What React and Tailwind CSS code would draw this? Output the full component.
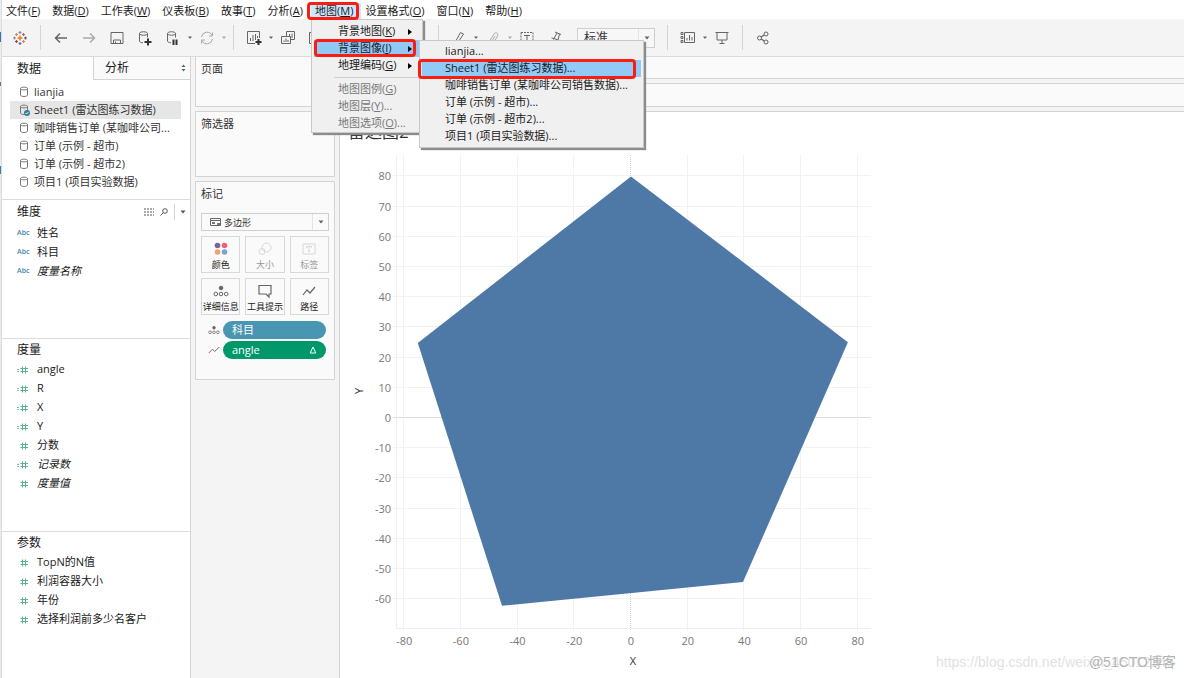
import clsx from 'clsx';

const MENUS = [
  ['文件', 'F'], ['数据', 'D'], ['工作表', 'W'], ['仪表板', 'B'], ['故事', 'T'],
  ['分析', 'A'], ['地图', 'M'], ['设置格式', 'O'], ['窗口', 'N'], ['帮助', 'H'],
];

const MAP_MENU = [
  { label: '背景地图', hotkey: 'K', sub: true },
  { label: '背景图像', hotkey: 'I', sub: true, active: true },
  { label: '地理编码', hotkey: 'G', sub: true },
  null,
  { label: '地图图例', hotkey: 'G', disabled: true },
  { label: '地图层', hotkey: 'Y', suffix: '...', disabled: true },
  { label: '地图选项', hotkey: 'O', suffix: '...', disabled: true },
];

const IMAGE_MENU = [
  'lianjia...',
  'Sheet1 (雷达图练习数据)...',
  '咖啡销售订单 (某咖啡公司销售数据)...',
  '订单 (示例 - 超市)...',
  '订单 (示例 - 超市2)...',
  '项目1 (项目实验数据)...',
];

const SOURCES = [
  'lianjia',
  'Sheet1 (雷达图练习数据)',
  '咖啡销售订单 (某咖啡公司...',
  '订单 (示例 - 超市)',
  '订单 (示例 - 超市2)',
  '项目1 (项目实验数据)',
];

const DIMENSIONS = [
  { name: '姓名', kind: 'abc' },
  { name: '科目', kind: 'abc' },
  { name: '度量名称', kind: 'abc', italic: true },
];

const MEASURES = [
  { name: 'angle', kind: 'calc' },
  { name: 'R', kind: 'calc' },
  { name: 'X', kind: 'calc' },
  { name: 'Y', kind: 'calc' },
  { name: '分数', kind: 'num' },
  { name: '记录数', kind: 'calc', italic: true },
  { name: '度量值', kind: 'num', italic: true },
];

const PARAMS = [
  { name: 'TopN的N值', kind: 'num' },
  { name: '利润容器大小', kind: 'num' },
  { name: '年份', kind: 'num' },
  { name: '选择利润前多少名客户', kind: 'num' },
];

const POINTS = [[0, 80], [76.5, 25.1], [39.5, -54.3], [-45.5, -62.2], [-75.2, 24.8]];

export default function App() {
  return (
    <div className="relative flex min-h-screen bg-white font-['Open_Sans','Noto_Sans_CJK_SC',sans-serif] text-[11px] text-[#1a1a1a]">
      <WindowEdge />
      <div className="flex min-w-0 flex-1 flex-col">
        <MenuBar />
        <Toolbar />
        <div className="flex flex-1 bg-[#f4f4f4]">
          <DataPane />
          <Cards />
          <Worksheet />
        </div>
      </div>
      <div className="absolute right-2 bottom-2 h-4 w-60 font-['Liberation_Sans','Noto_Sans_CJK_SC',sans-serif] text-[14px] leading-4 whitespace-nowrap">
        <span className="block text-[#e2e2e2]">https://blog.csdn.net/weixin_45012345</span>
        <span className="absolute top-0 right-0 text-[#b4b4b4]">@51CTO博客</span>
      </div>
    </div>
  );
}

// sliver of the window behind
function WindowEdge() {
  return (
    <div className="flex w-0.5 shrink-0 flex-col border-r border-[#dcdcdc] bg-[#ececec]">
      <div className="mt-8 h-2.5 bg-[#2a7ab8]" />
      <div className="mt-10 h-1 bg-[#777]" />
      <div className="mt-20 h-2 bg-[#3580a8]" />
    </div>
  );
}

function MenuBar() {
  return (
    <nav className="flex h-[19px] bg-white pt-[3px]">
      {MENUS.map(([label, hotkey]) => {
        const open = hotkey === 'M';
        return (
          <div key={hotkey} className="relative flex">
            <button className={clsx('flex h-4 items-center pr-2 pl-1 whitespace-nowrap', open && 'bg-[#cce8ff]')}>
              {label}(<u>{hotkey}</u>)
            </button>
            {open && (
              <>
                <MapMenu />
                <div className="absolute -top-px right-0.5 -left-1 z-30 h-[18px] rounded border-[3px] border-[#fb1d12]" />
              </>
            )}
          </div>
        );
      })}
    </nav>
  );
}

function MapMenu() {
  return (
    <div role="menu" className="absolute top-4 left-0 z-10 w-[112px] border border-[#c8c8c8] bg-[#f0f0f0] px-[2px] pt-[3px] shadow-[2px_2px_1px_#8c8c8c]">
      {MAP_MENU.map((item, i) =>
        item ? (
          <div key={i} className="relative">
            <button
              role="menuitem"
              disabled={item.disabled}
              className={clsx(
                'flex h-[17px] w-full items-center pl-6 whitespace-nowrap',
                item.active && 'bg-[#91c9f7]',
                item.disabled && 'text-[#777]'
              )}
            >
              {item.label}(<u>{item.hotkey}</u>){item.suffix}
              {item.sub && (
                <svg viewBox="0 0 4 6" className="mr-2 ml-auto h-1.5 w-1">
                  <path d="M0 0l4 3-4 3z" />
                </svg>
              )}
            </button>
            {item.active && (
              <>
                <ImageMenu />
                <div className="absolute -top-px left-0 z-30 h-[18px] w-[102px] rounded border-[3px] border-[#fb1d12]" />
              </>
            )}
          </div>
        ) : (
          <div key={i} className="my-[3px] ml-5 border-t border-[#cfcfcf]" />
        )
      )}
    </div>
  );
}

function ImageMenu() {
  return (
    <div role="menu" className="absolute top-0 left-[105px] z-20 w-[225px] border border-[#c8c8c8] bg-[#f0f0f0] p-[2px] shadow-[2px_2px_1px_#8c8c8c]">
      {IMAGE_MENU.map((label, i) => (
        <div key={label} className="relative">
          <button
            role="menuitem"
            className={clsx('flex h-[17px] w-full items-center pl-[23px] whitespace-nowrap', i === 1 && 'bg-[#91c9f7]')}
          >
            {label}
          </button>
          {i === 1 && <div className="absolute -top-px -left-1 z-30 h-5 w-[218px] rounded border-[3px] border-[#fb1d12]" />}
        </div>
      ))}
    </div>
  );
}

function Toolbar() {
  return (
    <div className="flex h-[38px] items-center border-b border-[#dadada] bg-[#f4f4f4] pl-1 text-[#666]">
      <Tool label="Tableau"><Logo /></Tool>
      <Divider />
      <Tool label="撤消"><path d="M14 8H3M7 3.500L2.500 8 7 12.500" strokeWidth="1.500" /></Tool>
      <Tool label="重做" dim><path d="M2 8h11M9 3.500L13.500 8 9 12.500" strokeWidth="1.500" /></Tool>
      <Tool label="保存"><path d="M2 2.500h12v11H2zM4.500 13.500v-3.500h7v3.500M6.500 13v-1.500" /></Tool>
      <Tool label="新建数据源">
        <path d="M2.500 3.500c0-2.300 8-2.300 8 0s-8 2.300-8 0v7.500c0 1 1.500 1.700 3.500 1.800M10.500 3.500v4" />
        <path d="M11 8.500v7M7.500 12h7" stroke="#333" strokeWidth="2" />
      </Tool>
      <Tool label="暂停自动更新">
        <path d="M2.500 3.500c0-2.300 8-2.300 8 0s-8 2.300-8 0v7.500c0 1 1.500 1.700 3.500 1.800M10.500 3.500v4" />
        <path d="M8.500 9.500v5.500M11.500 9.500v5.500" stroke="#333" strokeWidth="2" />
      </Tool>
      <Caret />
      <Tool label="运行更新" dim>
        <path d="M2.500 7A5.500 5.500 0 0 1 13 5.500M13.500 9A5.500 5.500 0 0 1 3 10.500M13.500 2.500v3.500h-3.500M2.500 13.500V10H6" />
      </Tool>
      <Caret dim />
      <Divider />
      <Tool label="新建工作表">
        <path d="M9 13.500H1.500v-12h12V8M4.500 11V8M7 11V5M9.500 10V4M11.500 8V6" />
        <path d="M12.500 9v6M9.500 12h6" stroke="#333" strokeWidth="2" />
      </Tool>
      <Caret />
      <Tool label="复制">
        <path d="M6.500 6.500v-5h8v8h-4M1.500 6.500h9v7h-9zM4 12v-1.500M6 12V8.500M8 12v-2M9.500 4v2M12 3.500V8" />
      </Tool>
      <Tool label="清除工作表"><path d="M1.500 2.500h12v11h-12z" /></Tool>
      <Caret />
      <Tool label="交换行和列"><path d="M3 5h9l-3-3M13 11H4l3 3" /></Tool>
      <Tool label="升序排序"><path d="M3 3v10M7 4h3M7 8h5M7 12h7" /></Tool>
      <Tool label="降序排序"><path d="M3 3v10M7 4h7M7 8h5M7 12h3" /></Tool>
      <div className="mr-1.5"><Caret /></div>
      <Divider />
      <Tool label="突出显示"><path d="M4 12.500L9.500 2.500l3 1.500-5.500 8.500zM4 12.500l-1.500 1.500H6" /></Tool>
      <Caret />
      <Tool label="组成员" dim><path d="M4 12L9 4c1.500-2.500 5-.5 3.500 2l-4 7c-1 1.500-3 .5-2-1l3.500-6" /></Tool>
      <Caret dim />
      <Tool label="显示标记标签">
        <path d="M2 2.500h12v10H2z" strokeDasharray="2 1" />
        <path d="M5 5.500h6M8 5.500V11" />
      </Tool>
      <Tool label="固定轴"><path d="M8 2l6 2.500M10 3L7 8.500l4 1.500M12.500 4l-1.500 6M7 8.500L4.500 8M6.500 9.500L3 14" /></Tool>
      <div className="relative mr-1.5 ml-2 h-5 w-[78px] border border-[#cfcfcf] bg-[#f7f7f7]">
        <select aria-label="适合" className="h-full w-full appearance-none pl-1.5 text-[12px] leading-[18px] text-[#333]">
          <option>标准</option>
        </select>
        <SelectArrow />
      </div>
      <Divider />
      <Tool label="显示卡">
        <path d="M1 2.500h2v2H1zM1 6.500h2v2H1zM1 10.500h2v2H1zM4.500 2.500h10v10h-10zM7 10.500V8M9.500 10.500V5M12 10.500V7" />
      </Tool>
      <Caret />
      <Tool label="演示模式"><path d="M1.500 2.500h13M3 2.500v7.500h10V2.500M8 10v3.500M5.500 13.500h5" /></Tool>
      <Divider />
      <Tool label="共享">
        <circle cx="4.500" cy="8" r="2" />
        <circle cx="11" cy="4" r="2" />
        <circle cx="11" cy="12" r="2" />
        <path d="M6.200 7l3-2M6.200 9l3 2" strokeWidth="1.300" />
      </Tool>
    </div>
  );
}

function Tool({ label, dim, children }) {
  return (
    <button aria-label={label} className={clsx('flex h-7 w-7 items-center justify-center', dim && 'text-[#aaa]')}>
      <svg viewBox="0 0 16 16" className="h-4 w-4" fill="none" stroke="currentColor">{children}</svg>
    </button>
  );
}

function Divider() {
  return <div className="mx-[6px] h-[25px] w-px bg-[#d4d4d4]" />;
}

function Caret({ dim }) {
  return (
    <svg viewBox="0 0 6 4" className={clsx('h-1 w-1.5', dim && 'text-[#aaa]')} fill="currentColor">
      <path d="M1 .5h4L3 3z" />
    </svg>
  );
}

function SelectArrow() {
  return (
    <div className="pointer-events-none absolute inset-y-0 right-0 flex w-4 items-center justify-center border-l border-[#e4e4e4] text-[#666]">
      <svg viewBox="0 0 6 4" className="h-1 w-1.5" fill="currentColor"><path d="M.5.5h5L3 3.500z" /></svg>
    </div>
  );
}

function Logo() {
  return (
    <g strokeWidth="1.200">
      <path d="M8 5.500v5M5.500 8h5" stroke="#eb7b30" strokeWidth="1.500" />
      <path d="M8 1v3M6.500 2.500h3" stroke="#6c8fb5" />
      <path d="M8 12v3M6.500 13.500h3" stroke="#54739f" />
      <path d="M2.500 6.500v3M1 8h3" stroke="#7099a6" />
      <path d="M13.500 6.500v3M12 8h3" stroke="#4a5f92" />
      <path d="M4.500 3v3M3 4.500h3" stroke="#e6892f" />
      <path d="M11.500 10v3M10 11.500h3" stroke="#e08a32" />
      <path d="M4.500 10v3M3 11.500h3" stroke="#c0394f" />
      <path d="M11.500 3v3M10 4.500h3" stroke="#cf5a65" />
    </g>
  );
}

function DataPane() {
  return (
    <aside className="flex w-[189px] shrink-0 flex-col border-r border-[#d4d4d4] bg-white">
      <div className="flex h-[23px] text-[12px]">
        <button className="w-[91px] pl-[15px] text-left">数据</button>
        <button className="flex flex-1 items-center justify-between border-b border-l border-[#d4d4d4] bg-[#fafafa] pr-1 pl-[11px]">
          分析
          <svg viewBox="0 0 5 8" className="h-2 w-[5px]" fill="#567"><path d="M.5 3L2.500.5l2 2.500zM.5 5l2 2.500 2-2.500z" /></svg>
        </button>
      </div>
      <ul className="h-[120px] border-b border-[#dcdcdc] pt-[3px] pr-[9px] pl-2">
        {SOURCES.map((name, i) => (
          <li key={name} className={clsx('flex h-[18px] items-center gap-1 pl-2 whitespace-nowrap text-[#333]', i === 1 && 'bg-[#e6e6e6]')}>
            <svg viewBox="0 0 12 12" className="h-3 w-3" fill="none" stroke="#777">
              <path d="M2.500 2.500c0-1.800 7-1.800 7 0s-7 1.800-7 0v6.500c0 2 7 2 7 0V2.500" />
              {i === 1 && <><circle cx="9" cy="9" r="3" fill="#2b7fa3" stroke="none" /><path d="M7.500 9l1 1 2-2" stroke="#fff" /></>}
            </svg>
            {name}
          </li>
        ))}
      </ul>
      <section className="h-[139px] border-b border-[#dcdcdc]">
        <div className="flex h-6 items-center">
          <h2 className="flex-1 pl-[15px] text-[12px]">维度</h2>
          <button aria-label="查看数据" className="mr-1.5">
            <svg viewBox="0 0 10 8" className="h-2 w-2.5" stroke="#555" strokeDasharray="2 1"><path d="M0 1h10M0 4h10M0 7h10" /></svg>
          </button>
          <button aria-label="查找字段" className="mr-1.5">
            <svg viewBox="0 0 8 8" className="h-2 w-2" fill="none" stroke="#555"><circle cx="5" cy="3" r="2.300" /><path d="M3.300 4.700L.5 7.500" /></svg>
          </button>
          <button aria-label="维度菜单" className="flex h-4 w-4 items-center justify-center border-l border-[#d4d4d4] text-[#555]">
            <svg viewBox="0 0 6 4" className="h-1 w-1.5" fill="currentColor"><path d="M.5.5h5L3 3.500z" /></svg>
          </button>
        </div>
        <FieldList fields={DIMENSIONS} />
      </section>
      <section className="h-[193px] border-b border-[#dcdcdc]">
        <h2 className="flex h-[21px] items-center pl-[15px] text-[12px]">度量</h2>
        <FieldList fields={MEASURES} />
      </section>
      <section className="flex-1">
        <h2 className="flex h-[21px] items-center pl-[15px] text-[12px]">参数</h2>
        <FieldList fields={PARAMS} />
      </section>
    </aside>
  );
}

function FieldList({ fields }) {
  return (
    <ul>
      {fields.map((f) => (
        <li key={f.name} className="flex h-[19px] items-center pl-[15px]">
          <span className="flex w-5 items-center">
            {f.kind === 'abc' ? (
              <span className="text-[7px] font-semibold text-[#3d85a5]">Abc</span>
            ) : (
              <svg viewBox="0 0 12 8" className="h-2 w-3" fill="none" stroke="#5cb394">
                {f.kind === 'calc' && <path d="M0 3.500h2M0 5.500h2" strokeWidth=".8" />}
                <path d="M5.500.5v7M8.500.5v7M3.500 2.500h7.500M3.500 5.500h7.500" />
              </svg>
            )}
          </span>
          <span className={clsx('whitespace-nowrap', f.italic && 'italic')}>{f.name}</span>
        </li>
      ))}
    </ul>
  );
}

function Cards() {
  return (
    <div className="flex w-[149px] shrink-0 flex-col gap-1 border-r border-[#d4d4d4] pr-1 pl-1 text-[#333]">
      <section className="h-[50px] border border-t-0 border-[#d4d4d4] bg-[#fafafa] px-[5px] pt-1">
        <h2 className="leading-4">页面</h2>
      </section>
      <section className="h-[66px] border border-[#d4d4d4] bg-[#fafafa] px-[5px] pt-1">
        <h2 className="leading-4">筛选器</h2>
      </section>
      <section className="h-[199px] border border-[#d4d4d4] bg-[#fafafa] px-[5px] pt-1">
        <h2 className="leading-4">标记</h2>
        <div className="relative mt-[11px] h-[18px] border border-[#cfcfcf]">
          <select aria-label="标记类型" className="h-full w-full appearance-none pl-[22px] text-[9px] leading-4">
            <option>多边形</option>
          </select>
          <svg viewBox="0 0 11 8" className="absolute top-1 left-2 h-2 w-[11px]" fill="none" stroke="#666">
            <path d="M.5.5h10v7H.5zM.5 2.500h10" /><path d="M2 4h3v2H2zM7 5h3v2H7z" fill="#777" stroke="none" />
          </svg>
          <SelectArrow />
        </div>
        <div className="mt-[5px] grid grid-cols-3 gap-[5px]">
          <Mark label="颜色">
            <g stroke="none">
              <circle cx="4.500" cy="4.500" r="2.800" fill="#7a6496" /><circle cx="11.500" cy="4.500" r="2.800" fill="#ef6274" />
              <circle cx="4.500" cy="11" r="2.800" fill="#f2a06c" /><circle cx="11.500" cy="11" r="2.800" fill="#7ba3d0" />
            </g>
          </Mark>
          <Mark label="大小" dim><circle cx="9.500" cy="6.500" r="4.500" /><circle cx="5" cy="10.500" r="3" /></Mark>
          <Mark label="标签" dim><path d="M2 3h12v10H2zM5.500 7V5.500h5V7M8 5.500v5M7 10.500h2" /></Mark>
          <Mark label="详细信息"><DetailDots /></Mark>
          <Mark label="工具提示"><path d="M2 2.500h12v8.500h-2v3L9 11H2z" strokeWidth="1.200" /></Mark>
          <Mark label="路径"><path d="M2 12l4-5 3 3 5-6" strokeWidth="1.200" /></Mark>
        </div>
        <div className="mt-1.5 flex flex-col gap-0.5">
          <Pill icon={<DetailDots />} className="bg-[#4996b2]">科目</Pill>
          <Pill icon={<path d="M1 12l5-5 3 3 6-6" strokeWidth="1.300" />} className="bg-[#00986a]">
            angle
            <svg viewBox="0 0 8 8" className="h-2 w-2" fill="none" stroke="#fff"><path d="M4 1l2.800 6H1.200z" /></svg>
          </Pill>
        </div>
      </section>
    </div>
  );
}

function DetailDots() {
  return (
    <>
      <circle cx="8" cy="5" r="1.800" fill="currentColor" />
      <circle cx="2.800" cy="11" r="1.800" />
      <circle cx="8" cy="11" r="1.800" />
      <circle cx="13.200" cy="11" r="1.800" />
    </>
  );
}

function Mark({ label, dim, children }) {
  return (
    <button
      disabled={dim}
      className={clsx(
        'flex h-[37px] flex-col items-center justify-between border border-[#d8d8d8] pt-1 text-[9px] leading-[14px] whitespace-nowrap',
        dim ? 'text-[#999]' : 'text-[#222]'
      )}
    >
      <svg viewBox="0 0 16 16" className={clsx('h-4 w-4 shrink-0', dim ? 'text-[#d8d8d8]' : 'text-[#666]')} fill="none" stroke="currentColor">
        {children}
      </svg>
      {label}
    </button>
  );
}

function Pill({ icon, className, children }) {
  return (
    <div className="flex items-center gap-[3px] pr-[3px] pl-[7px]">
      <svg viewBox="0 0 16 16" className="h-3 w-3 shrink-0 text-[#666]" fill="none" stroke="currentColor">{icon}</svg>
      <div className={clsx('flex h-[18px] flex-1 items-center justify-between rounded-full pr-[9px] pl-[9px] text-white', className)}>
        {children}
      </div>
    </div>
  );
}

function Worksheet() {
  return (
    <main className="flex min-w-0 flex-1 flex-col">
      <div className="flex h-[22px] items-center border-b border-[#d4d4d4] bg-[#fafafa] pl-2">列</div>
      <div className="mt-1 flex h-6 items-center border-y border-[#d4d4d4] bg-[#fafafa] pl-2">行</div>
      <div className="mt-1 flex-1 overflow-hidden border-t border-[#d4d4d4] bg-white pt-2">
        <h1 className="flex h-6 items-center pl-2 text-[17px] text-[#333]">雷达图2</h1>
        <Chart />
      </div>
    </main>
  );
}

const sx = (v) => 291 + v * 2.835;
const sy = (v) => 274 - v * 3.02;
const X_TICKS = [-80, -60, -40, -20, 0, 20, 40, 60, 80];
const Y_TICKS = [80, 70, 60, 50, 40, 30, 20, 10, 0, -10, -20, -30, -40, -50, -60];

function Chart() {
  return (
    <svg width="540" height="534" viewBox="0 0 540 534" className="block text-[11px]" fill="#787878">
      {Y_TICKS.map((t) => (
        <g key={t}>
          <path d={`M53 ${Math.round(sy(t)) - 0.5}H531`} stroke={t === 0 ? '#dcdcdc' : '#f2f2f2'} />
          <text x="51" y={sy(t) + 4} textAnchor="end">{t}</text>
        </g>
      ))}
      {X_TICKS.map((t) => (
        <g key={t}>
          <path d={`M${Math.round(sx(t)) - 0.5} 11V487`} stroke={t === 0 ? '#d0d0d0' : '#f2f2f2'} strokeDasharray={t === 0 ? '1 1' : undefined} />
          <text x={sx(t)} y="501" textAnchor="middle">{t}</text>
        </g>
      ))}
      <path d="M56.500 11V484.500H531" fill="none" stroke="#efefef" />
      <polygon points={POINTS.map(([x, y]) => `${sx(x)},${sy(y)}`).join(' ')} fill="#4e79a7" />
      <text x="293" y="521" textAnchor="middle" fill="#333">X</text>
      <text transform="translate(23 247) rotate(-90)" textAnchor="middle" fill="#333">Y</text>
    </svg>
  );
}
